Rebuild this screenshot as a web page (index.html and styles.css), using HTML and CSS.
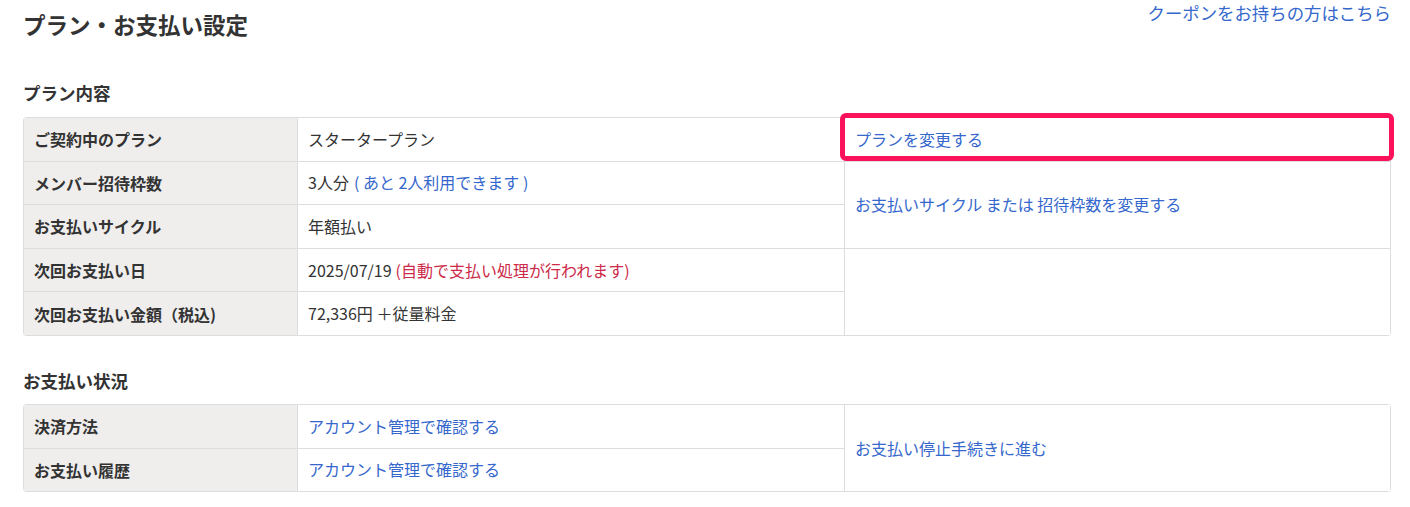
FILE: index.html
```html
<!DOCTYPE html>
<html lang="ja">
<head>
    <meta charset="UTF-8">
    <meta name="viewport" content="width=device-width, initial-scale=1.0">
    <title>プラン・お支払い設定</title>

    <link rel="stylesheet" href="styles.css">
</head>
<body>
  <div class="page">
    <div class="header">
      <h1>プラン・お支払い設定</h1>
      <a href="#" class="coupon">クーポンをお持ちの方はこちら</a>
    </div>

    <h2>プラン内容</h2>
    <div class="table plan">
      <div class="label">ご契約中のプラン</div>
      <div class="value">スタータープラン</div>
      <div class="action"><a href="#">プランを変更する</a></div>

      <div class="label">メンバー招待枠数</div>
      <div class="value">3人分<a href="#" class="remain">( あと 2人利用できます )</a></div>
      <div class="action span2"><a href="#">お支払いサイクル または 招待枠数を変更する</a></div>

      <div class="label">お支払いサイクル</div>
      <div class="value">年額払い</div>

      <div class="label">次回お支払い日</div>
      <div class="value">2025/07/19<span class="notice">(自動で支払い処理が行われます)</span></div>
      <div class="action span2"></div>

      <div class="label">次回お支払い金額（税込)</div>
      <div class="value">72,336円 ＋従量料金</div>

      <div class="highlight"></div>
    </div>

    <h2 class="second">お支払い状況</h2>
    <div class="table">
      <div class="label">決済方法</div>
      <div class="value"><a href="#">アカウント管理で確認する</a></div>
      <div class="action span2"><a href="#">お支払い停止手続きに進む</a></div>

      <div class="label">お支払い履歴</div>
      <div class="value"><a href="#">アカウント管理で確認する</a></div>
    </div>
  </div>
</body>
</html>
```

FILE: styles.css
```css
*{
  margin: 0;
  padding: 0;
  box-sizing: border-box;
}

body{
  background-color: white;
  font-family: "Noto Sans CJK JP", "Liberation Sans", sans-serif;
  color: #333;
}

a{
  color: #3567cc;
  text-decoration: none;
}

.page{
  padding: 0 19px 0 23px;
}

.header{
  display: flex;
  justify-content: space-between;
  align-items: flex-start;
}

h1{
  font-size: 22.5px;
  font-weight: 700;
  line-height: 32px;
  margin-top: 8px;
}

.coupon{
  font-size: 17.4px;
  line-height: 26px;
}

h2{
  font-size: 17.5px;
  font-weight: 700;
  line-height: 26px;
  margin-top: 40px;
  margin-bottom: 11px;
}

h2.second{
  margin-top: 32px;
  margin-bottom: 10px;
}

.table{
  position: relative;
  display: grid;
  grid-template-columns: 273px 546px 1fr;
  grid-auto-rows: 42.6px;
  gap: 1px;
  padding: 1px;
  background-color: #dddddd;
  border-radius: 4px;
  font-size: 16px;
}

.label{
  display: flex;
  align-items: center;
  padding-left: 10px;
  background-color: #efeeed;
  font-weight: 700;
}

.value, .action{
  display: flex;
  align-items: center;
  padding-left: 10px;
  padding-bottom: 1px;
  background-color: white;
}

.span2{
  grid-row: span 2;
}

.remain{
  margin-left: 5px;
}

.notice{
  color: #cc2a48;
  margin-left: 4px;
}

.highlight{
  position: absolute;
  left: 817px;
  top: -4px;
  width: 554px;
  height: 48px;
  border: 5px solid #fc115b;
  border-radius: 6px;
}
```
